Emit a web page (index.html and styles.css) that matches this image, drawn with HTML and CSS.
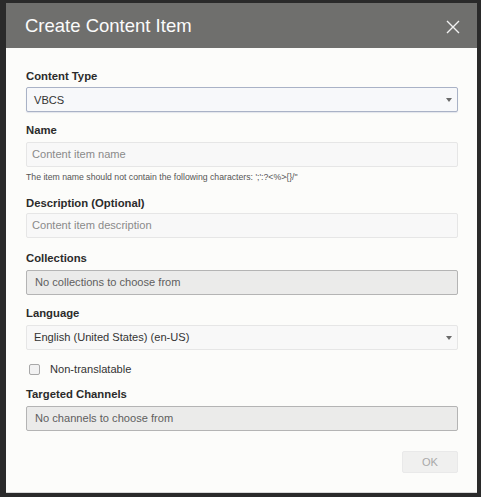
FILE: index.html
```html
<!DOCTYPE html>
<html>
<head>
<meta charset="utf-8">
<link rel="stylesheet" href="styles.css">
</head>
<body>
<div class="dialog">
  <div class="header">
    <h1 class="title">Create Content Item</h1>
    <svg class="close" width="14" height="14" viewBox="0 0 14 14"><path d="M1 1 L13 13 M13 1 L1 13" stroke="#f2f2f2" stroke-width="1.4" fill="none"/></svg>
  </div>
  <div class="body">
    <label class="label l-type">Content Type</label>
    <div class="input select focused"><span class="val">VBCS</span><span class="caret"></span></div>

    <label class="label l-name">Name</label>
    <div class="input"><span class="ph">Content item name</span></div>
    <div class="help">The item name should not contain the following characters: ';':?&lt;%&gt;{}/"</div>

    <label class="label l-desc">Description (Optional)</label>
    <div class="input"><span class="ph">Content item description</span></div>

    <label class="label l-coll">Collections</label>
    <div class="input disabled"><span class="dis">No collections to choose from</span></div>

    <label class="label l-lang">Language</label>
    <div class="input select"><span class="val">English (United States) (en-US)</span><span class="caret"></span></div>

    <div class="check-row"><span class="checkbox"></span><span class="check-text">Non-translatable</span></div>

    <label class="label l-chan">Targeted Channels</label>
    <div class="input disabled"><span class="dis">No channels to choose from</span></div>

    <div class="footer"><button class="ok">OK</button></div>
  </div>
</div>
</body>
</html>
```
FILE: styles.css
```css
html, body {
  margin: 0;
  padding: 0;
  background: #2a2a2a;
  width: 481px;
  height: 497px;
  overflow: hidden;
}
body {
  padding: 3px 4px 0 6px;
  box-sizing: border-box;
  font-family: "Liberation Sans", Arial, sans-serif;
}
.dialog {
  width: 471px;
  height: 490px;
  background: #fcfcfa;
  display: flex;
  flex-direction: column;
  border-bottom: 1px solid #d8d8d8;
  box-sizing: border-box;
}
.header {
  height: 45px;
  background: #6f6f6d;
  display: flex;
  align-items: center;
  justify-content: space-between;
  padding: 0 17px 0 19px;
  flex: none;
}
.title {
  margin: 0;
  font-weight: normal;
  font-size: 18.5px;
  color: #fbfbfb;
  padding-top: 1px;
}
.close {
  display: block;
  margin-top: 2px;
}
.body {
  padding: 0 19px 0 20px;
  display: flex;
  flex-direction: column;
}
.label {
  display: block;
  font-weight: bold;
  font-size: 11.3px;
  line-height: 14px;
  color: #2b2b2b;
  margin-bottom: 4.5px;
}
.l-type { margin-top: 20.5px; }
.l-name { margin-top: 11px; }
.l-desc { margin-top: 13px; margin-bottom: 3px; }
.l-coll { margin-top: 13.5px; }
.l-lang { margin-top: 11.5px; }
.l-chan { margin-top: 12.5px; }
.input {
  height: 25px;
  box-sizing: border-box;
  border: 1px solid #e6e6e6;
  background: #f8f8f8;
  border-radius: 2px;
  display: flex;
  align-items: center;
  padding: 0 6px;
  font-size: 11.1px;
  position: relative;
}
.input.focused {
  border-color: #a9b2c6;
  background: #f7f8fa;
  box-shadow: 0 1px 1px rgba(150,160,190,0.25);
}
.val { color: #333; }
.ph { color: #8a8a8a; }
.input .ph { margin-left: -1px; }
.disabled {
  background: #ebebea;
  border-color: #b4b4b4;
  padding-left: 8px;
}
.dis { color: #5e5e5e; }
.select .val { margin-left: 1px; }
.caret {
  position: absolute;
  right: 5px;
  top: 10px;
  width: 0;
  height: 0;
  border-left: 3.5px solid transparent;
  border-right: 3.5px solid transparent;
  border-top: 4px solid #6a6a6a;
}
.help {
  font-size: 8.7px;
  color: #555;
  line-height: 11px;
  margin-top: 5px;
}
.check-row {
  display: flex;
  align-items: center;
  margin-top: 14px;
  height: 11px;
}
.checkbox {
  width: 9px;
  height: 9px;
  border: 1px solid #a8a8a8;
  border-radius: 2px;
  background: #f2f2f2;
  margin-left: 3px;
}
.check-text {
  margin-left: 10px;
  font-size: 11.1px;
  color: #333;
}
.footer {
  display: flex;
  justify-content: flex-end;
  margin-top: 20px;
}
.ok {
  width: 56px;
  height: 22px;
  border: 1px solid #e9e9e9;
  background: #f0f0ef;
  color: #a9a9a9;
  font-family: "Liberation Sans", Arial, sans-serif;
  font-size: 11.1px;
  border-radius: 2px;
  padding: 0;
}
```
